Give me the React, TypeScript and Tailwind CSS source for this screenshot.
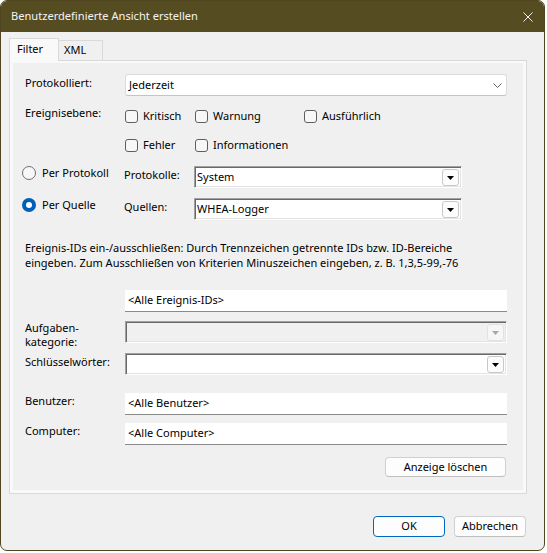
import React from "react";

function Tri({ disabled }: { disabled?: boolean }) {
  return (
    <svg width="7" height="4" viewBox="0 0 7 4">
      <path d="M0 0H7L3.5 4Z" fill={disabled ? "#a8a8a8" : "#000"} />
    </svg>
  );
}

function DropBtn({ disabled }: { disabled?: boolean }) {
  return (
    <div
      className={
        disabled
          ? "ml-auto mr-px mt-px flex h-[17px] w-[17px] shrink-0 items-center justify-center rounded-[3px] border border-[#e2e2e2] bg-[#f6f6f6]"
          : "ml-auto mr-px mt-px flex h-[17px] w-[17px] shrink-0 items-center justify-center rounded-[3px] border border-[#c8c8c8] bg-[#fcfcfc]"
      }
    >
      <Tri disabled={disabled} />
    </div>
  );
}

function Combo({ value, wide, disabled }: { value?: string; wide?: boolean; disabled?: boolean }) {
  return (
    <div
      className={
        (wide ? "w-[382px] " : "w-[268px] ") +
        (disabled ? "bg-[#f0f0f0] " : "bg-white ") +
        "flex h-[22px] items-start border border-t-[#a0a0a0] border-l-[#a0a0a0] border-r-white border-b-white p-px shadow-[inset_1px_1px_0_#696969,inset_-1px_-1px_0_#e3e3e3]"
      }
    >
      <span className="pl-px leading-[18px] text-black">{value}</span>
      <DropBtn disabled={disabled} />
    </div>
  );
}

function Edit({ value }: { value: string }) {
  return (
    <div className="flex h-[22px] w-[382px] items-center border-b border-b-[#8a8a8a] bg-white pl-[3px] text-black">
      {value}
    </div>
  );
}

function Check({ label }: { label: string }) {
  return (
    <div className="flex h-[16px] items-center">
      <div className="h-[13px] w-[13px] shrink-0 rounded-[3px] border border-[#5f5f5f] bg-[#f7f7f7]" />
      <span className="ml-[5px] leading-[16px]">{label}</span>
    </div>
  );
}

function Radio({ label, checked }: { label: string; checked?: boolean }) {
  return (
    <div className="-mt-px flex h-[16px] w-[102px] shrink-0 items-center">
      {checked ? (
        <div className="flex h-[14px] w-[14px] shrink-0 items-center justify-center rounded-full bg-[#005fb8]">
          <div className="h-[6px] w-[6px] rounded-full bg-white" />
        </div>
      ) : (
        <div className="h-[14px] w-[14px] shrink-0 rounded-full border border-[#6f6f6f] bg-[#f7f7f7]" />
      )}
      <span className="ml-[6px] leading-[16px]">{label}</span>
    </div>
  );
}

function Btn({ children, primary, w }: { children: React.ReactNode; primary?: boolean; w: string }) {
  return (
    <div
      className={
        w +
        (primary
          ? " flex h-[21px] items-center justify-center rounded-[4px] border border-[#0067c0] bg-[#fdfdfd]"
          : " flex h-[21px] items-center justify-center rounded-[4px] border border-[#d0d0d0] border-b-[#bdbdbd] bg-[#fdfdfd]")
      }
    >
      {children}
    </div>
  );
}

export default function App() {
  return (
    <div className="h-[553px] w-[547px] bg-white font-['Noto_Sans',sans-serif] text-[11px] text-black">
      <div className="flex h-[551px] w-[545px] flex-col overflow-hidden rounded-[7px] border border-[#4f4620] bg-[#f0f0f0]">
        {/* Title bar */}
        <div className="flex h-[31px] shrink-0 items-center justify-between bg-[#564c21] pl-[10px] pr-[10px] text-[#f3f3f3]">
          <span className="text-[11.1px]">Benutzerdefinierte Ansicht erstellen</span>
          <svg width="10" height="10" viewBox="0 0 10 10" className="mr-[1px]">
            <path d="M0.5 0.5L9.5 9.5M9.5 0.5L0.5 9.5" stroke="#f0f0f0" strokeWidth="1" />
          </svg>
        </div>

        {/* Tabs */}
        <div className="ml-[8px] mt-[6px] flex h-[22px] items-end">
          <div className="relative z-10 -mb-px flex h-[23px] w-[50px] items-start border border-b-0 border-[#d9d9d9] bg-[#f9f9f9] pl-[7px] pt-[2px]">
            Filter
          </div>
          <div className="flex h-[20px] w-[44px] items-start border border-b-0 border-l-0 border-[#d9d9d9] bg-[#f0f0f0] pl-[5px] pt-[1px]">
            XML
          </div>
        </div>

        {/* Panel */}
        <div className="ml-[8px] h-[434px] w-[518px] border border-[#d9d9d9] bg-[#f9f9f9] px-[3px] pb-[3px] pt-[2px]">
          <div className="flex h-full flex-col bg-[#f0f0f0]">
            {/* Protokolliert */}
            <div className="mt-[11px] flex items-start pl-[12px]">
              <div className="w-[100px] pt-px leading-[16px]">Protokolliert:</div>
              <div className="flex h-[22px] w-[382px] items-center justify-between rounded-[3px] border border-[#dadada] border-b-[#c4c4c4] bg-white pl-[3px] pr-[4px]">
                <span>Jederzeit</span>
                <svg width="9" height="5" viewBox="0 0 9 5">
                  <path d="M0.5 0.5L4.5 4.5L8.5 0.5" fill="none" stroke="#606060" strokeWidth="1" />
                </svg>
              </div>
            </div>

            {/* Ereignisebene */}
            <div className="mt-[9px] flex items-start pl-[12px]">
              <div className="w-[100px] leading-[16px]">Ereignisebene:</div>
              <div className="flex flex-col gap-[13px] pt-[3px]">
                <div className="flex">
                  <div className="w-[70px]">
                    <Check label="Kritisch" />
                  </div>
                  <div className="w-[109px]">
                    <Check label="Warnung" />
                  </div>
                  <Check label="Ausführlich" />
                </div>
                <div className="flex">
                  <div className="w-[70px]">
                    <Check label="Fehler" />
                  </div>
                  <Check label="Informationen" />
                </div>
              </div>
            </div>

            {/* Per Protokoll */}
            <div className="mt-[13px] flex items-start pl-[9px]">
              <Radio label="Per Protokoll" />
              <div className="w-[70px] pt-px leading-[16px]">Protokolle:</div>
              <Combo value="System" />
            </div>

            {/* Per Quelle */}
            <div className="mt-[10px] flex items-start pl-[9px]">
              <Radio label="Per Quelle" checked />
              <div className="w-[70px] pt-px leading-[16px]">Quellen:</div>
              <Combo value="WHEA-Logger" />
            </div>

            {/* Description */}
            <div className="mt-[20px] whitespace-nowrap pl-[12px] leading-[15px]">
              Ereignis-IDs ein-/ausschließen: Durch Trennzeichen getrennte IDs bzw. ID-Bereiche
              <br />
              eingeben. Zum Ausschließen von Kriterien Minuszeichen eingeben, z. B. 1,3,5-99,-76
            </div>

            {/* Ereignis-IDs */}
            <div className="mt-[20px] flex pl-[12px]">
              <div className="w-[100px]" />
              <Edit value="<Alle Ereignis-IDs>" />
            </div>

            {/* Aufgabenkategorie */}
            <div className="mt-[9px] flex items-start pl-[12px]">
              <div className="w-[100px] leading-[14px]">
                Aufgaben-
                <br />
                kategorie:
              </div>
              <Combo wide disabled />
            </div>

            {/* Schlüsselwörter */}
            <div className="mt-[4px] flex items-start pl-[12px]">
              <div className="w-[100px] pt-px leading-[16px]">Schlüsselwörter:</div>
              <Combo wide />
            </div>

            {/* Benutzer */}
            <div className="mt-[18px] flex items-start pl-[12px]">
              <div className="w-[100px] leading-[16px]">Benutzer:</div>
              <Edit value="<Alle Benutzer>" />
            </div>

            {/* Computer */}
            <div className="mt-[8px] flex items-start pl-[12px]">
              <div className="w-[100px] leading-[16px]">Computer:</div>
              <Edit value="<Alle Computer>" />
            </div>

            {/* Anzeige löschen */}
            <div className="mt-[12px] flex justify-end pr-[17px]">
              <div className="flex h-[20px] w-[121px] items-center justify-center rounded-[4px] border border-[#d0d0d0] border-b-[#bdbdbd] bg-[#fdfdfd]">
                Anzeige löschen
              </div>
            </div>
          </div>
        </div>

        {/* Footer */}
        <div className="mt-[22px] flex justify-end gap-[9px] pr-[18px]">
          <Btn primary w="w-[72px]">
            OK
          </Btn>
          <Btn w="w-[72px]">Abbrechen</Btn>
        </div>
      </div>
    </div>
  );
}
